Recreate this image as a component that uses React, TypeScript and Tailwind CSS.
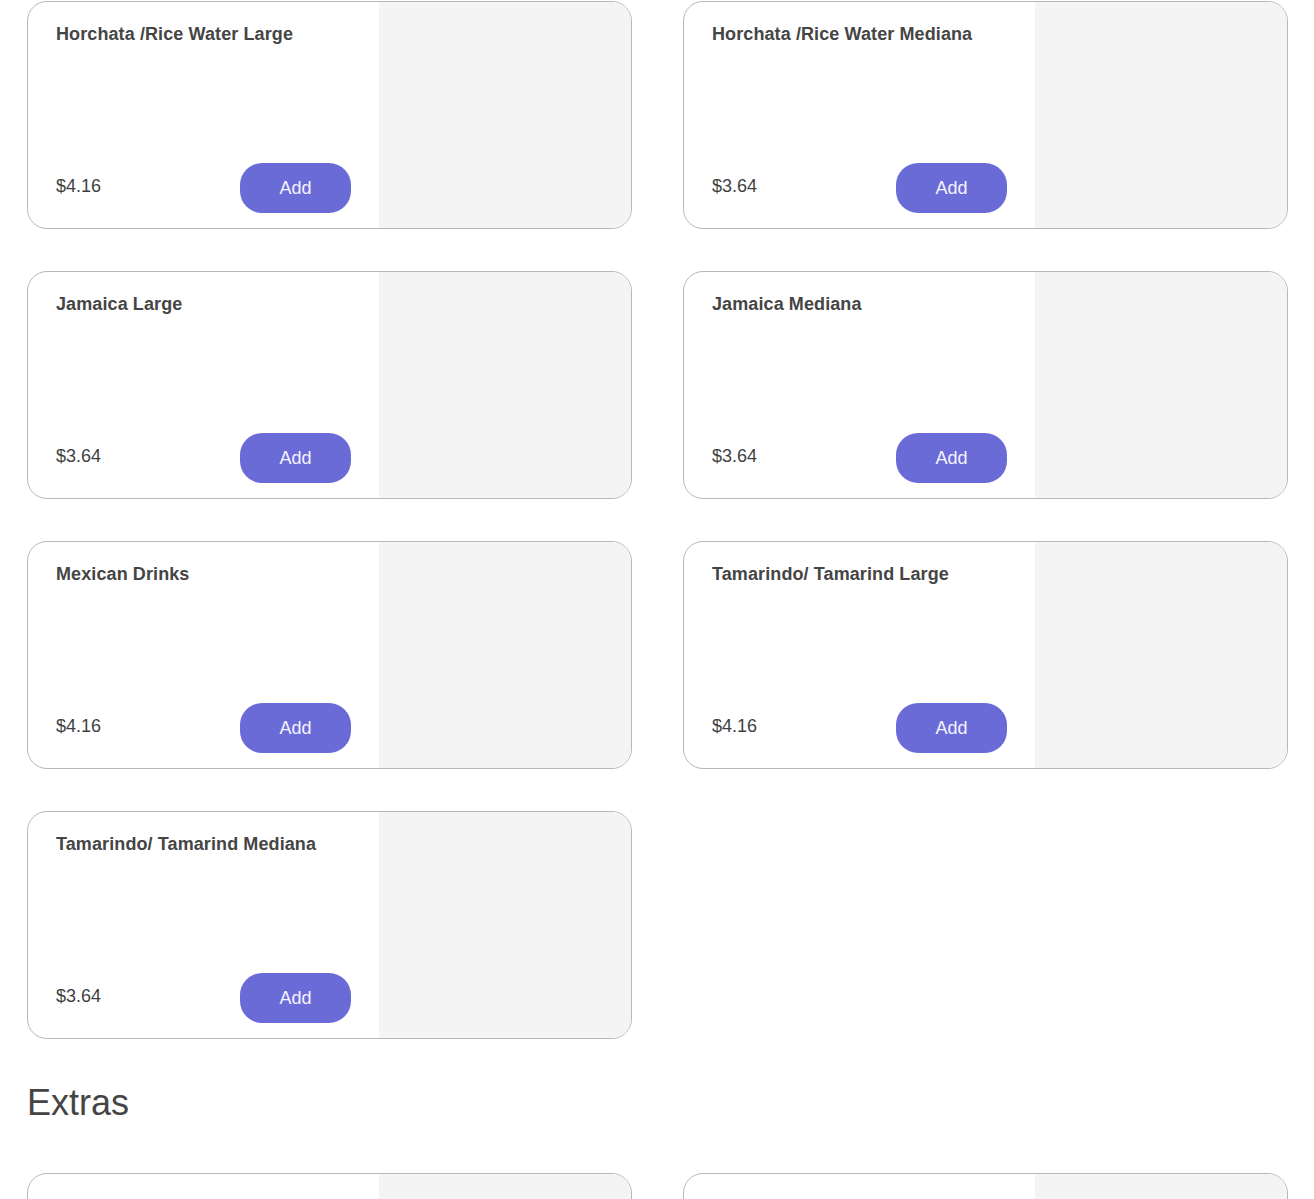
import React from "react";

type Item = { name: string; price: string };

const drinks: Item[] = [
  { name: "Horchata /Rice Water Large", price: "$4.16" },
  { name: "Horchata /Rice Water Mediana", price: "$3.64" },
  { name: "Jamaica Large", price: "$3.64" },
  { name: "Jamaica Mediana", price: "$3.64" },
  { name: "Mexican Drinks", price: "$4.16" },
  { name: "Tamarindo/ Tamarind Large", price: "$4.16" },
  { name: "Tamarindo/ Tamarind Mediana", price: "$3.64" },
];

const extras: Item[] = [
  { name: "Extra Guacamole Side", price: "$1.50" },
  { name: "Extra Sour Cream Side", price: "$1.00" },
];

function Card({ item, faded }: { item: Item; faded?: boolean }) {
  return (
    <div className="flex h-[228px] overflow-hidden rounded-[20px] border border-[#b8b8b8] bg-white">
      <div className="flex w-[351px] flex-col justify-between pl-[28px] pr-[28px] pt-[20px] pb-[15px]">
        <div
          className={
            "text-[18px] font-bold leading-[24px] tracking-[0.1px] " +
            (faded ? "text-[#ececec]" : "text-[#454545]")
          }
        >
          {item.name}
        </div>
        <div className="flex items-center justify-between">
          <span className="mb-[5px] text-[18px] leading-[24px] text-[#3f3f3f]">{item.price}</span>
          <button className="h-[50px] w-[111px] rounded-[22px] bg-[#6b6bd8] text-[18px] text-[#f4f4fb]">
            Add
          </button>
        </div>
      </div>
      <div className="flex-1 bg-[#f4f4f4]" />
    </div>
  );
}

export default function App() {
  return (
    <div
      className="min-h-screen bg-white pl-[27px] pt-px"
      style={{ fontFamily: '"Liberation Sans", Arial, Helvetica, sans-serif' }}
    >
      <div className="grid grid-cols-[605px_605px] gap-x-[51px] gap-y-[42px]">
        {drinks.map((d) => (
          <Card key={d.name} item={d} />
        ))}
      </div>
      <h2 className="mt-[42px] text-[36px] font-normal leading-[44px] text-[#454545]">Extras</h2>
      <div className="mt-[48px] grid grid-cols-[605px_605px] gap-x-[51px] gap-y-[42px]">
        {extras.map((d) => (
          <Card key={d.name} item={d} faded />
        ))}
      </div>
    </div>
  );
}
